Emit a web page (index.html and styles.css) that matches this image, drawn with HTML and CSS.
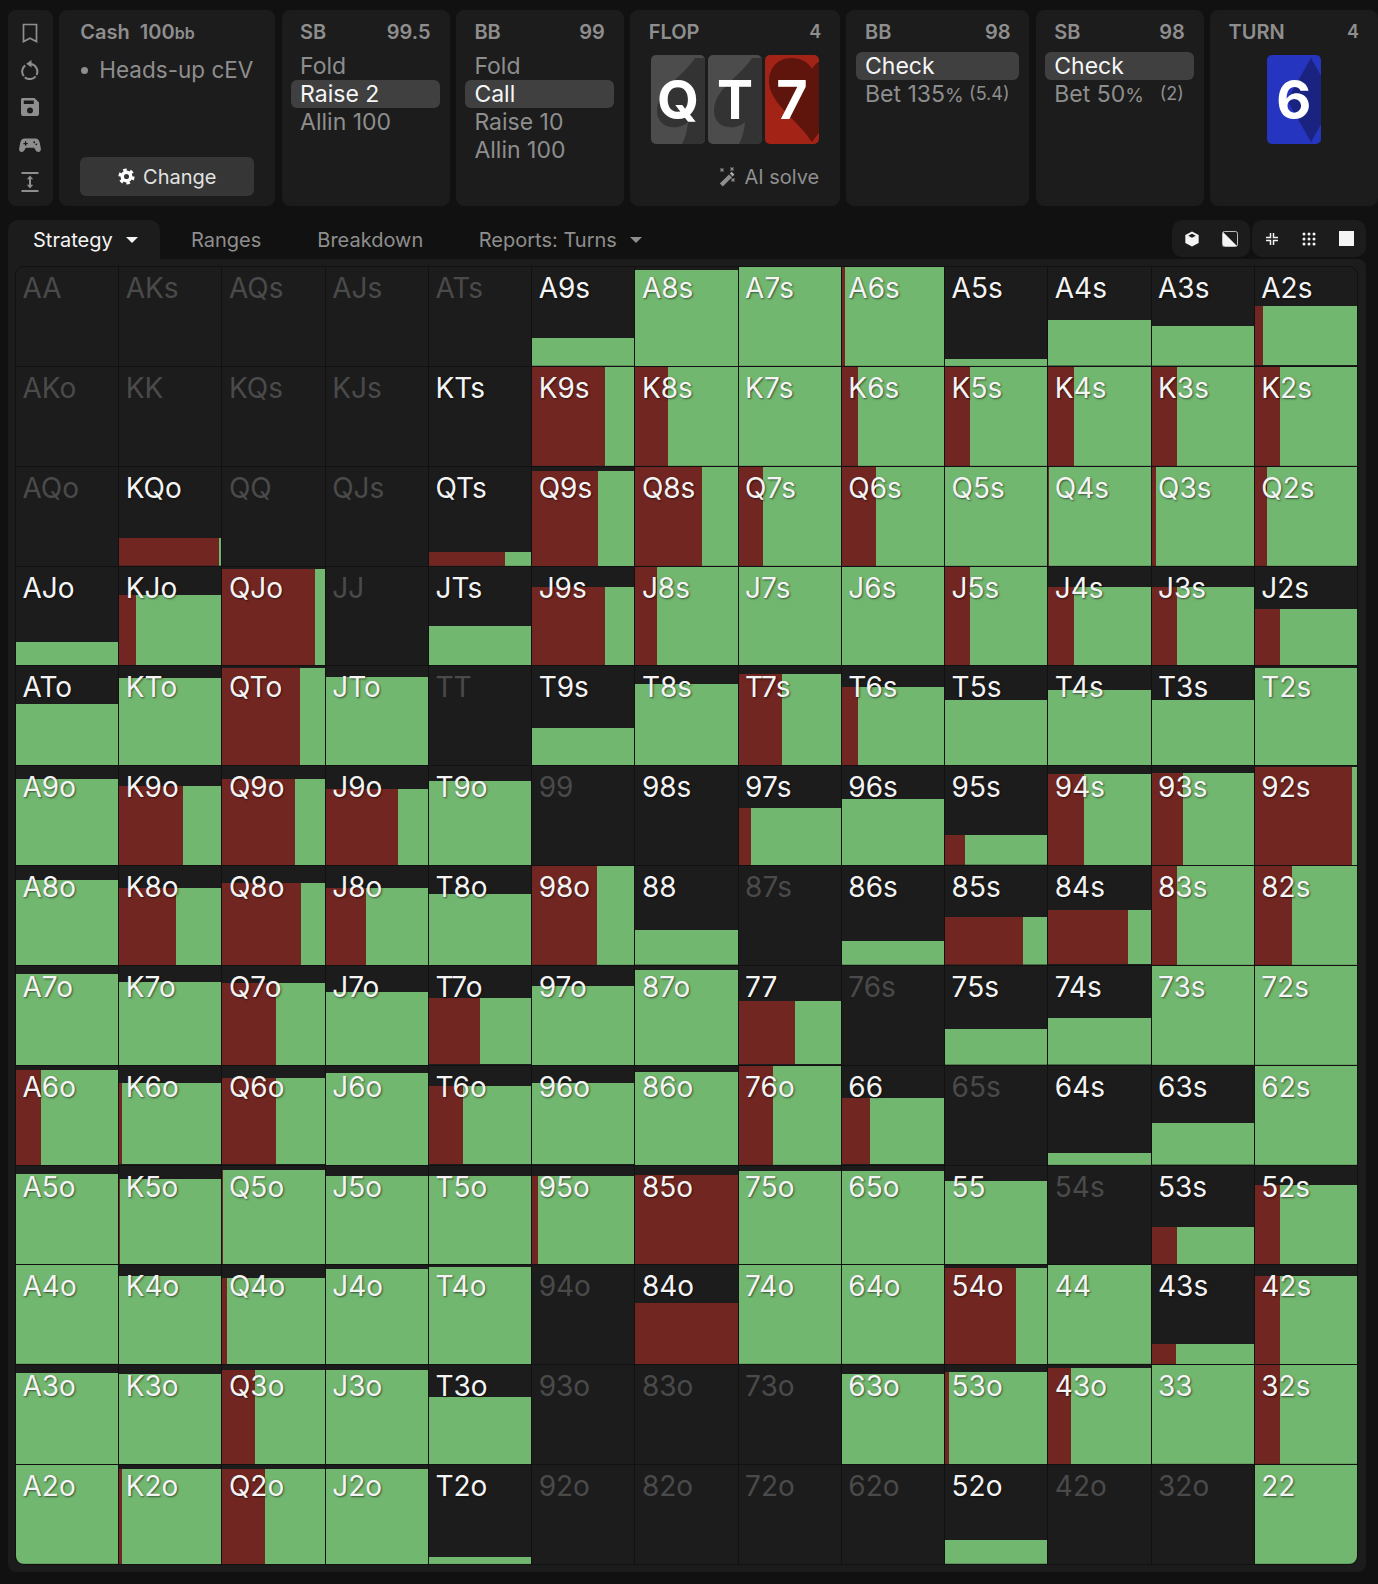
FILE: index.html
```html
<!DOCTYPE html>
<html lang="en">
<head>
<meta charset="utf-8">
<title>Strategy</title>
<link rel="stylesheet" href="styles.css">
</head>
<body>
<header class="top">
  <nav class="card side">
    <svg class="si" viewBox="0 0 20 20"><path d="M3.500 1.500h13v17L10 15.200 3.500 18.500z" fill="none" stroke="currentColor" stroke-width="1.700"/></svg>
    <svg class="si" viewBox="0 0 20 20"><path d="M5.200 5.400A7.600 7.600 0 1 0 11 4" fill="none" stroke="currentColor" stroke-width="2" stroke-dasharray="12 1.500 12 1.500 30"/><path d="M11.500 0v7.500L6.200 3.700z" fill="currentColor"/></svg>
    <svg class="si" viewBox="0 0 20 20"><path fill-rule="evenodd" d="M2.500 1h12L19 5.500V17a2 2 0 0 1-2 2H3a2 2 0 0 1-2-2V2.500A1.500 1.500 0 0 1 2.500 1zM3.800 3.500v3.500h10V3.500zM10 10.500a3 3 0 1 0 0 6 3 3 0 0 0 0-6z" fill="currentColor"/></svg>
    <svg class="si wide" viewBox="0 0 24 20"><path fill-rule="evenodd" d="M6 3h12c2.500 0 3.800 1.500 4.500 4l1.300 6.500c.4 2.500-.8 4.200-2.600 4.200-1.600 0-2.500-1-3.400-2.500L16.500 13h-9l-1.300 2.200c-.9 1.500-1.800 2.500-3.400 2.500-1.800 0-3-1.700-2.600-4.200L1.500 7C2.200 4.500 3.500 3 6 3zM6.500 6v1.700H4.800v1.400h1.700v1.700h1.400V9.100h1.700V7.700H7.900V6zM16.500 6a1 1 0 1 0 0 2 1 1 0 0 0 0-2zM18.800 8.300a1 1 0 1 0 0 2 1 1 0 0 0 0-2z" fill="currentColor"/></svg>
    <svg class="si" viewBox="0 0 20 20"><path d="M1.500 1h17M1.500 19h17" stroke="currentColor" stroke-width="1.800"/><path d="M10 3.500l3.200 3.800H11v5.400h2.200L10 16.500l-3.200-3.800H9V7.300H6.800z" fill="currentColor"/></svg>
  </nav>

  <section class="card setup">
    <h2 class="title"><span>Cash&nbsp; 100<small>bb</small></span></h2>
    <p class="mode"><i></i>Heads-up cEV</p>
    <button class="change">
      <svg class="gear" viewBox="0 0 20 20"><circle cx="10" cy="10" r="5" fill="none" stroke="#fff" stroke-width="4"/><circle cx="10" cy="10" r="7.800" fill="none" stroke="#fff" stroke-width="3.400" stroke-dasharray="4.100 4.070"/></svg>
      Change
    </button>
  </section>

  <section class="card act w168">
    <h2 class="title"><span>SB</span><span>99.5</span></h2>
    <ul class="opts">
      <li>Fold</li>
      <li class="on">Raise 2</li>
      <li>Allin 100</li>
    </ul>
  </section>

  <section class="card act w168">
    <h2 class="title"><span>BB</span><span>99</span></h2>
    <ul class="opts">
      <li>Fold</li>
      <li class="on">Call</li>
      <li>Raise 10</li>
      <li>Allin 100</li>
    </ul>
  </section>

  <section class="card act flop">
    <h2 class="title"><span>FLOP</span><span class="n">4</span></h2>
    <div class="deck">
      <div class="pc spade"><svg viewBox="0 0 54 89"><path d="M44 3C32 22 6 34 6 56c0 14 14 20 27 14 2-1 3-2 4-3-1 10-3 16-6 22h26V3z"/></svg><b>Q</b></div>
      <div class="pc spade"><svg viewBox="0 0 54 89"><path d="M44 3C32 22 6 34 6 56c0 14 14 20 27 14 2-1 3-2 4-3-1 10-3 16-6 22h26V3z"/></svg><b>T</b></div>
      <div class="pc heart"><svg viewBox="0 0 54 89"><path d="M47 14C43 6 34 3 26 3 12 3 4 14 4 26c0 22 26 36 43 61C64 62 90 48 90 26 90 14 82 3 68 3 60 3 51 6 47 14z"/></svg><b>7</b></div>
    </div>
    <p class="solve">
      <svg class="wand" viewBox="0 0 20 20"><path d="M2.800 16.600 12 7.400l3 2.800-9.200 9.200z" fill="#8e8e8e"/><path d="M12.800 6.600l1.800-1.800 2.800 2.800-1.800 1.800z" fill="#aaa"/><path d="M3.500 1.500l3 3M6.500 1.500l-3 3M13.500 .5l3 3M16.500 .5l-3 3M14.500 11.500l3 3M17.500 11.500l-3 3" stroke="#8e8e8e" stroke-width="1.100" transform="translate(0 0)"/></svg>
      AI solve
    </p>
  </section>

  <section class="card act w183">
    <h2 class="title"><span>BB</span><span>98</span></h2>
    <ul class="opts up">
      <li class="on">Check</li>
      <li class="row"><span>Bet 135<small>%</small></span><small class="amt">(5.4)</small></li>
    </ul>
  </section>

  <section class="card act w168">
    <h2 class="title"><span>SB</span><span>98</span></h2>
    <ul class="opts up">
      <li class="on">Check</li>
      <li class="row"><span>Bet 50<small>%</small></span><small class="amt">(2)</small></li>
    </ul>
  </section>

  <section class="card act w168">
    <h2 class="title"><span>TURN</span><span class="n">4</span></h2>
    <div class="deck">
      <div class="pc diamond"><svg viewBox="0 0 54 89"><path d="M44 3 20 45 44 87 68 45z"/></svg><b>6</b></div>
    </div>
  </section>
</header>

<div class="tabs">
  <button class="tab active">Strategy<i class="caret"></i></button>
  <button class="tab">Ranges</button>
  <button class="tab">Breakdown</button>
  <button class="tab">Reports: Turns<i class="caret grey"></i></button>
  <div class="tools">
    <div class="tg t1">
      <svg class="ti" viewBox="0 0 16 18"><path fill-rule="evenodd" d="M8 .5 15.500 4.500v9L8 17.500.5 13.500v-9zM8 3 3.700 5.300 8 7.600l4.300-2.300z" fill="#f4f4f4"/></svg>
      <svg class="ti" viewBox="0 0 16 16"><rect x=".5" y=".5" width="15" height="15" rx="2" fill="none" stroke="#bdbdbd" stroke-width="1"/><path d="M1 1l14 14H2.500A1.500 1.500 0 0 1 1 13.500z" fill="#f4f4f4"/></svg>
    </div>
    <div class="tg t2">
      <svg class="ti small" viewBox="0 0 12 12"><path d="M4.500 0v4.500H0M7.500 0v4.500H12M4.500 12V7.500H0M7.500 12V7.500H12" fill="none" stroke="#f4f4f4" stroke-width="1.500"/></svg>
      <svg class="ti mid" viewBox="0 0 14 14"><g fill="#f4f4f4"><circle cx="2" cy="2" r="1.500"/><circle cx="7" cy="2" r="1.500"/><circle cx="12" cy="2" r="1.500"/><circle cx="2" cy="7" r="1.500"/><circle cx="7" cy="7" r="1.500"/><circle cx="12" cy="7" r="1.500"/><circle cx="2" cy="12" r="1.500"/><circle cx="7" cy="12" r="1.500"/><circle cx="12" cy="12" r="1.500"/></g></svg>
      <span class="sq"></span>
    </div>
  </div>
</div>

<main class="panel">
  <div class="grid">
    <div class="c off">AA</div><div class="c off">AKs</div><div class="c off">AQs</div><div class="c off">AJs</div><div class="c off">ATs</div>
    <div class="c" style="--h:28%">A9s</div><div class="c" style="--h:97%">A8s</div><div class="c" style="--h:100%">A7s</div><div class="c" style="--h:100%;--r:3%">A6s</div><div class="c" style="--h:7%">A5s</div><div class="c" style="--h:46%">A4s</div><div class="c" style="--h:40%">A3s</div><div class="c" style="--h:60%;--r:8%">A2s</div>

    <div class="c off">AKo</div><div class="c off">KK</div><div class="c off">KQs</div><div class="c off">KJs</div><div class="c">KTs</div>
    <div class="c" style="--h:100%;--r:72%">K9s</div><div class="c" style="--h:100%;--r:32%">K8s</div><div class="c" style="--h:100%">K7s</div><div class="c" style="--h:100%;--r:16%">K6s</div><div class="c" style="--h:100%;--r:25%">K5s</div><div class="c" style="--h:100%;--r:25%">K4s</div><div class="c" style="--h:100%;--r:25%">K3s</div><div class="c" style="--h:100%;--r:25%">K2s</div>

    <div class="c off">AQo</div><div class="c" style="--h:28%;--r:98%">KQo</div><div class="c off">QQ</div><div class="c off">QJs</div><div class="c" style="--h:14%;--r:75%">QTs</div>
    <div class="c" style="--h:96%;--r:65%">Q9s</div><div class="c" style="--h:100%;--r:65%">Q8s</div><div class="c" style="--h:100%;--r:24%">Q7s</div><div class="c" style="--h:100%;--r:33%">Q6s</div><div class="c" style="--h:100%">Q5s</div><div class="c" style="--h:100%;--r:1%">Q4s</div><div class="c" style="--h:100%;--r:4%">Q3s</div><div class="c" style="--h:100%;--r:12%">Q2s</div>

    <div class="c" style="--h:24%">AJo</div><div class="c" style="--h:72%;--r:17%">KJo</div><div class="c" style="--h:98%;--r:90%">QJo</div><div class="c off">JJ</div><div class="c" style="--h:40%">JTs</div>
    <div class="c" style="--h:80%;--r:72%">J9s</div><div class="c" style="--h:100%;--r:21%">J8s</div><div class="c" style="--h:100%">J7s</div><div class="c" style="--h:100%">J6s</div><div class="c" style="--h:100%;--r:25%">J5s</div><div class="c" style="--h:80%;--r:25%">J4s</div><div class="c" style="--h:80%;--r:25%">J3s</div><div class="c" style="--h:58%;--r:25%">J2s</div>

    <div class="c" style="--h:62%">ATo</div><div class="c" style="--h:88%">KTo</div><div class="c" style="--h:98%;--r:76%">QTo</div><div class="c" style="--h:89%">JTo</div><div class="c off">TT</div>
    <div class="c" style="--h:38%">T9s</div><div class="c" style="--h:82%">T8s</div><div class="c" style="--h:92%;--r:42%">T7s</div><div class="c" style="--h:79%;--r:16%">T6s</div><div class="c" style="--h:66%">T5s</div><div class="c" style="--h:76%">T4s</div><div class="c" style="--h:66%">T3s</div><div class="c" style="--h:98%">T2s</div>

    <div class="c" style="--h:87%">A9o</div><div class="c" style="--h:80%;--r:63%">K9o</div><div class="c" style="--h:87%;--r:71%">Q9o</div><div class="c" style="--h:77%;--r:71%">J9o</div><div class="c" style="--h:85%">T9o</div>
    <div class="c off">99</div><div class="c">98s</div><div class="c" style="--h:58%;--r:12%">97s</div><div class="c" style="--h:67%">96s</div><div class="c" style="--h:30%;--r:20%">95s</div><div class="c" style="--h:92%;--r:35%">94s</div><div class="c" style="--h:93%;--r:30%">93s</div><div class="c" style="--h:99%;--r:95%">92s</div>

    <div class="c" style="--h:86%">A8o</div><div class="c" style="--h:78%;--r:56%">K8o</div><div class="c" style="--h:83%;--r:77%">Q8o</div><div class="c" style="--h:78%;--r:39%">J8o</div><div class="c" style="--h:72%">T8o</div>
    <div class="c" style="--h:100%;--r:64%">98o</div><div class="c" style="--h:35%">88</div><div class="c off">87s</div><div class="c" style="--h:24%">86s</div><div class="c" style="--h:48%;--r:76%">85s</div><div class="c" style="--h:55%;--r:78%">84s</div><div class="c" style="--h:100%;--r:25%">83s</div><div class="c" style="--h:100%;--r:36%">82s</div>

    <div class="c" style="--h:92%">A7o</div><div class="c" style="--h:84%">K7o</div><div class="c" style="--h:83%;--r:52%">Q7o</div><div class="c" style="--h:74%">J7o</div><div class="c" style="--h:67%;--r:50%">T7o</div>
    <div class="c" style="--h:80%">97o</div><div class="c" style="--h:96%">87o</div><div class="c" style="--h:64%;--r:55%">77</div><div class="c off">76s</div><div class="c" style="--h:36%">75s</div><div class="c" style="--h:47%">74s</div><div class="c" style="--h:100%">73s</div><div class="c" style="--h:100%">72s</div>

    <div class="c" style="--h:96%;--r:25%">A6o</div><div class="c" style="--h:82%;--r:3%">K6o</div><div class="c" style="--h:87%;--r:52%">Q6o</div><div class="c" style="--h:93%">J6o</div><div class="c" style="--h:79%;--r:33%">T6o</div>
    <div class="c" style="--h:82%">96o</div><div class="c" style="--h:94%">86o</div><div class="c" style="--h:100%;--r:33%">76o</div><div class="c" style="--h:67%;--r:27%">66</div><div class="c off">65s</div><div class="c" style="--h:12%">64s</div><div class="c" style="--h:42%">63s</div><div class="c" style="--h:100%">62s</div>

    <div class="c" style="--h:92%">A5o</div><div class="c" style="--h:87%;--r:1%">K5o</div><div class="c" style="--h:96%;--r:1%">Q5o</div><div class="c" style="--h:90%">J5o</div><div class="c" style="--h:90%">T5o</div>
    <div class="c" style="--h:90%;--r:6%">95o</div><div class="c" style="--h:91%;--r:100%">85o</div><div class="c" style="--h:95%">75o</div><div class="c" style="--h:95%">65o</div><div class="c" style="--h:85%">55</div><div class="c off">54s</div><div class="c" style="--h:38%;--r:25%">53s</div><div class="c" style="--h:81%;--r:25%">52s</div>

    <div class="c" style="--h:100%">A4o</div><div class="c" style="--h:89%">K4o</div><div class="c" style="--h:87%;--r:5%">Q4o</div><div class="c" style="--h:96%">J4o</div><div class="c" style="--h:98%">T4o</div>
    <div class="c off">94o</div><div class="c" style="--h:62%;--r:100%">84o</div><div class="c" style="--h:100%">74o</div><div class="c" style="--h:100%">64o</div><div class="c" style="--h:97%;--r:70%">54o</div><div class="c" style="--h:100%">44</div><div class="c" style="--h:21%;--r:24%">43s</div><div class="c" style="--h:89%;--r:25%">42s</div>

    <div class="c" style="--h:92%">A3o</div><div class="c" style="--h:91%">K3o</div><div class="c" style="--h:95%;--r:32%">Q3o</div><div class="c" style="--h:95%">J3o</div><div class="c" style="--h:68%">T3o</div>
    <div class="c off">93o</div><div class="c off">83o</div><div class="c off">73o</div><div class="c" style="--h:91%">63o</div><div class="c" style="--h:93%;--r:4%">53o</div><div class="c" style="--h:97%;--r:22%">43o</div><div class="c" style="--h:100%">33</div><div class="c" style="--h:100%;--r:25%">32s</div>

    <div class="c" style="--h:100%">A2o</div><div class="c" style="--h:96%;--r:3%">K2o</div><div class="c" style="--h:96%;--r:42%">Q2o</div><div class="c" style="--h:96%">J2o</div><div class="c" style="--h:7%">T2o</div>
    <div class="c off">92o</div><div class="c off">82o</div><div class="c off">72o</div><div class="c off">62o</div><div class="c" style="--h:24%">52o</div><div class="c off">42o</div><div class="c off">32o</div><div class="c" style="--h:100%">22</div>
  </div>
</main>
</body>
</html>
```
FILE: styles.css
```css
* { box-sizing: border-box; }
html, body { margin: 0; height: 100%; }
body {
  background: #111;
  font-family: Inter, "Liberation Sans", sans-serif;
  color: #8e8e8e;
  padding: 10px 0 0 8px;
  overflow: hidden;
}
.top { display: flex; gap: 6.3px; height: 196px; width: 1400px; }
.card { background: #1c1c1c; border-radius: 8px; flex: none; }
.side { width: 45px; display: flex; flex-direction: column; align-items: center; padding: 13px 1px 0 0; gap: 17.200px; }
.si { width: 20px; height: 20px; color: #8e8e8e; display: block; }
.si.wide { width: 22px; }
.setup { width: 216px; padding: 0 21px; display: flex; flex-direction: column; }
.title { display: flex; justify-content: space-between; margin: 0; padding-top: 10px; font-size: 20px; line-height: 24px; font-weight: 600; color: #8e8e8e; }
.title small { font-size: 16px; font-weight: 600; }
.title .n { font-size: 18px; }
.mode { margin: 11px 0 0; font-size: 22.500px; line-height: 28px; white-space: nowrap; display: flex; align-items: center; }
.mode i { width: 7px; height: 7px; border-radius: 50%; background: #8e8e8e; margin: 0 11px 0 1px; }
.change { margin-top: auto; margin-bottom: 10px; width: 174px; height: 39px; background: #363636; border: 0; border-radius: 6px; color: #e2e2e2; font: 400 20px Inter, sans-serif; display: flex; align-items: center; justify-content: center; gap: 8px; }
.gear { width: 17px; height: 17px; }
.act { padding: 0 19px 0 18.500px; }
.w168 { width: 168px; }
.w183 { width: 183px; }
.flop { width: 210px; }
.opts { list-style: none; margin: 8px -9px 0; padding: 0; font-size: 23px; line-height: 28px; }
.opts li { padding: 0 9px; height: 28px; border-radius: 6px; }
.opts .on { background: #404040; color: #f6f6f6; }
.opts .row { display: flex; justify-content: space-between; padding-right: 10px; }
.opts .row small { font-size: 19px; }
.opts .row .amt { font-size: 18px; }
.deck { display: flex; justify-content: center; gap: 3px; margin-top: 11px; }
.pc { position: relative; width: 54px; height: 89px; border-radius: 5px; overflow: hidden; display: flex; align-items: center; justify-content: center; }
.pc svg { position: absolute; inset: 0; width: 100%; height: 100%; }
.pc b { position: relative; font-size: 54px; line-height: 1; font-weight: 700; color: #fff; }
.spade { background: #4c4c4c; }
.spade path { fill: #333; }
.heart { background: #a32416; }
.heart path { fill: #5f140c; }
.diamond { background: #2535c0; }
.diamond path { fill: #1a2480; }
.solve { margin: 21px 2px 0 0; font-size: 20px; line-height: 24px; display: flex; justify-content: flex-end; align-items: center; gap: 7px; }
.wand { width: 20px; height: 20px; }
.tabs { display: flex; height: 39px; margin: 14px 12px 0 0; align-items: stretch; }
.tab { background: none; border: 0; font: 400 20px Inter, sans-serif; color: #8e8e8e; padding: 0 28px; display: flex; align-items: center; height: 39px; }
.tab.active { background: #1c1c1c; color: #f4f4f4; border-radius: 10px 10px 0 0; width: 152px; padding: 0 0 0 25px; margin-right: 3px; }
.tab:nth-child(3) { padding-right: 27.500px; }
.caret { width: 0; height: 0; border: 6px solid transparent; border-top: 6px solid #f4f4f4; border-bottom: 0; margin-left: 13px; }
.tools { margin-left: auto; display: flex; gap: 2px; }
.tg { background: #1c1c1c; border-radius: 10px; height: 37px; display: flex; align-items: center; }
.t1 { width: 78px; justify-content: space-around; padding: 0 1px; }
.t2 { width: 114px; justify-content: space-between; padding: 0 12px 0 14px; }
.caret.grey { border-top-color: #8e8e8e; }
.ti { display: block; width: 16px; height: 16px; }
.ti.small { width: 12px; height: 12px; }
.ti.mid { width: 14px; height: 14px; }
.sq { width: 15px; height: 15px; background: #f4f4f4; display: block; }
.panel { background: #1c1c1c; width: 1358px; height: 1313px; border-radius: 0 8px 8px 8px; padding: 7px 0 0 7px; }
.grid { display: grid; grid-template-columns: repeat(13, 1fr); grid-template-rows: repeat(13, 1fr); gap: 1px; width: 1343px; height: 1299px; background: #111; border: 1px solid #111; border-radius: 9px; overflow: hidden; }
.c {
  --h: 0%;
  --r: 0%;
  background-color: #1c1c1c;
  background-image: linear-gradient(to right, #722622 var(--r), #72b76f var(--r));
  background-size: 100% var(--h);
  background-position: left bottom;
  background-repeat: no-repeat;
  color: #f4f4f4;
  font-size: 28px;
  line-height: 34px;
  padding: 4px 0 0 6.500px;
  text-shadow: 1px 1px 2px rgba(0, 0, 0, .55);
}
.c.off { color: #4a4a4a; text-shadow: none; }
```
